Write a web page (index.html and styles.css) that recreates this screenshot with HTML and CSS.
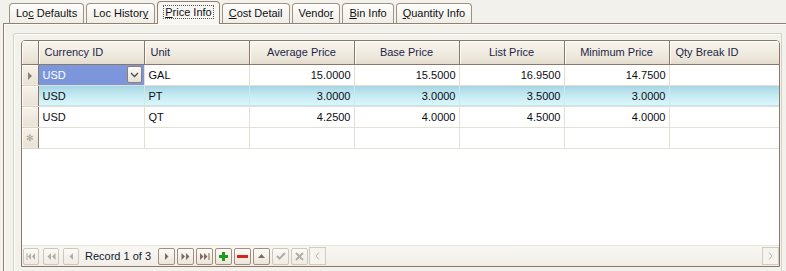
FILE: index.html
```html
<!DOCTYPE html>
<html lang="en">
<head>
    <meta charset="UTF-8">
    <title>Price Info</title>
    <link rel="stylesheet" href="styles.css">
</head>
<body>
    <div class="tabs">
        <div class="tab">Lo<u>c</u> Defaults</div>
        <div class="tab">Loc Histor<u>y</u></div>
        <div class="tab active"><span class="focus"><u>P</u>rice Info</span></div>
        <div class="tab"><u>C</u>ost Detail</div>
        <div class="tab">Vendo<u>r</u></div>
        <div class="tab"><u>B</u>in Info</div>
        <div class="tab"><u>Q</u>uantity Info</div>
    </div>

    <div class="page">
        <div class="inner">
            <div class="grid">
                <table>
                    <colgroup>
                        <col class="c-ind">
                        <col class="c-first">
                        <col class="c-std">
                        <col class="c-std">
                        <col class="c-std">
                        <col class="c-std">
                        <col class="c-std">
                        <col class="c-last">
                    </colgroup>
                    <thead>
                        <tr>
                            <th class="ind"></th>
                            <th class="left">Currency ID</th>
                            <th class="left">Unit</th>
                            <th>Average Price</th>
                            <th>Base Price</th>
                            <th>List Price</th>
                            <th>Minimum Price</th>
                            <th class="left last">Qty Break ID</th>
                        </tr>
                    </thead>
                    <tbody>
                        <tr>
                            <td class="ind"><span class="arrow"></span></td>
                            <td class="selected">
                                <div class="editor">
                                    <span>USD</span>
                                    <span class="drop">
                                        <svg width="9" height="6" viewBox="0 0 9 6"><path d="M1 1 L4.5 4.5 L8 1" fill="none" stroke="#4a4a4a" stroke-width="1.3"/></svg>
                                    </span>
                                </div>
                            </td>
                            <td>GAL</td>
                            <td class="num">15.0000</td>
                            <td class="num">15.5000</td>
                            <td class="num">16.9500</td>
                            <td class="num">14.7500</td>
                            <td></td>
                        </tr>
                        <tr class="hot">
                            <td class="ind"></td>
                            <td>USD</td>
                            <td>PT</td>
                            <td class="num">3.0000</td>
                            <td class="num">3.0000</td>
                            <td class="num">3.5000</td>
                            <td class="num">3.0000</td>
                            <td></td>
                        </tr>
                        <tr>
                            <td class="ind"></td>
                            <td>USD</td>
                            <td>QT</td>
                            <td class="num">4.2500</td>
                            <td class="num">4.0000</td>
                            <td class="num">4.5000</td>
                            <td class="num">4.0000</td>
                            <td></td>
                        </tr>
                        <tr>
                            <td class="ind new">&#x273B;</td>
                            <td></td>
                            <td></td>
                            <td></td>
                            <td></td>
                            <td></td>
                            <td></td>
                            <td></td>
                        </tr>
                    </tbody>
                </table>

                <div class="filler"></div>

                <div class="footer">
                    <div class="navigator">
                        <span class="nav-btn off wide">
                            <svg width="10" height="7" viewBox="0 0 10 7"><path d="M1 0v7" stroke="currentColor"/><path d="M5 0v7L2 3.5z M9 0v7L6 3.5z" fill="currentColor"/></svg>
                        </span>
                        <span class="nav-btn off wide">
                            <svg width="9" height="7" viewBox="0 0 9 7"><path d="M4 0v7L0.5 3.5z M8.5 0v7L5 3.5z" fill="currentColor"/></svg>
                        </span>
                        <span class="nav-btn off wide">
                            <svg width="5" height="7" viewBox="0 0 5 7"><path d="M4 0v7L0.5 3.5z" fill="currentColor"/></svg>
                        </span>
                        <span class="record">Record 1 of 3</span>
                        <span class="nav-btn">
                            <svg width="5" height="7" viewBox="0 0 5 7"><path d="M1 0v7L4.5 3.5z" fill="currentColor"/></svg>
                        </span>
                        <span class="nav-btn">
                            <svg width="9" height="7" viewBox="0 0 9 7"><path d="M0.5 0v7L4 3.5z M5 0v7L8.5 3.5z" fill="currentColor"/></svg>
                        </span>
                        <span class="nav-btn">
                            <svg width="10" height="7" viewBox="0 0 10 7"><path d="M0 0v7L3.5 3.5z M4 0v7L7.5 3.5z" fill="currentColor"/><path d="M9 0v7" stroke="currentColor"/></svg>
                        </span>
                        <span class="nav-btn">
                            <svg width="9" height="9" viewBox="0 0 9 9"><path d="M3 0h3v3h3v3H6v3H3V6H0V3h3z" fill="#1f9a1f"/></svg>
                        </span>
                        <span class="nav-btn">
                            <svg width="11" height="3" viewBox="0 0 11 3"><rect width="11" height="3" fill="#d8231f"/></svg>
                        </span>
                        <span class="nav-btn">
                            <svg width="7" height="4" viewBox="0 0 7 4"><path d="M0 4L3.5 0L7 4z" fill="currentColor"/></svg>
                        </span>
                        <span class="nav-btn off">
                            <svg width="10" height="8" viewBox="0 0 10 8"><path d="M1 4L3.5 6.5L9 1" fill="none" stroke="currentColor" stroke-width="2"/></svg>
                        </span>
                        <span class="nav-btn off">
                            <svg width="9" height="9" viewBox="0 0 9 9"><path d="M1 1L8 8M8 1L1 8" stroke="currentColor" stroke-width="2"/></svg>
                        </span>
                    </div>
                    <div class="hscroll">
                        <span class="scroll-btn">
                            <svg width="5" height="8" viewBox="0 0 5 8"><path d="M4 0.5L1 4L4 7.5" fill="none" stroke="currentColor"/></svg>
                        </span>
                        <span class="track"></span>
                        <span class="scroll-btn">
                            <svg width="5" height="8" viewBox="0 0 5 8"><path d="M1 0.5L4 4L1 7.5" fill="none" stroke="currentColor"/></svg>
                        </span>
                    </div>
                </div>
            </div>
        </div>
    </div>
</body>
</html>
```

FILE: styles.css
```css
* {
    box-sizing: border-box;
}

body {
    margin: 0;
    width: 786px;
    height: 271px;
    overflow: hidden;
    background-color: #f3f1eb;
    font-family: 'Liberation Sans', Arial, sans-serif;
    font-size: 11px;
    color: #000;
}

/* tab strip */

.tabs {
    display: flex;
    align-items: flex-end;
    height: 23px;
    padding-left: 9px;
    position: relative;
    z-index: 2;
}

.tab {
    height: 20px;
    line-height: 19px;
    padding: 0 6px;
    margin-right: 2px;
    border: 1px solid #a09282;
    border-bottom: none;
    border-radius: 4px 4px 0 0;
    background: linear-gradient(#fefefd, #f0ede5);
    color: #111;
    white-space: nowrap;
}

.tab.active {
    height: 23px;
    margin-bottom: -1px;
    padding-top: 1px;
    background: #f7f6f2;
    border-color: #8f8274;
}

.focus {
    outline: 1px dotted #555;
    outline-offset: 0;
    padding: 0 1px;
}

/* tab page */

.page {
    margin-left: 3px;
    width: 820px;
    height: 248px;
    border-top: 1px solid #8f8274;
    border-left: 1px solid #8f8274;
    box-shadow: inset 1px 1px 0 #fbfaf7;
    padding: 9px 0 0 9px;
}

.inner {
    width: 769px;
    height: 238px;
    border: 1px solid #d6d0c6;
    border-bottom: none;
    border-radius: 3px 0 0 0;
    box-shadow: inset 1px 1px 0 #fdfcfa;
    padding: 6px 0 0 7px;
}

/* grid */

.grid {
    width: 759px;
    height: 227px;
    border: 1px solid #8b7868;
    border-radius: 4px 4px 0 0;
    background: #fff;
    display: flex;
    flex-direction: column;
    overflow: hidden;
}

table {
    border-collapse: collapse;
    table-layout: fixed;
    width: 757px;
}

.c-ind { width: 16px; }
.c-first { width: 106px; }
.c-std { width: 105px; }
.c-last { width: 110px; }

th {
    height: 23px;
    padding: 0;
    font-weight: normal;
    color: #1d2546;
    text-align: center;
    background: linear-gradient(#f8f6ef, #ece6da 75%, #e2dacb);
    border-right: 1px solid #8b7868;
    border-bottom: 1px solid #8b7868;
    box-shadow: inset 1px 1px 0 #fdfcf9;
}

th.left {
    text-align: left;
    padding-left: 6px;
}

th.last {
    border-right: none;
}

td {
    height: 21px;
    padding: 0 0 0 4px;
    border-right: 1px solid #e4dfd6;
    border-bottom: 1px solid #e4dfd6;
    white-space: nowrap;
    color: #0c0c14;
}

td:last-child {
    border-right: none;
}

td.num {
    text-align: right;
    padding: 0 3px 0 0;
}

td.ind {
    padding: 0;
    text-align: center;
    background: linear-gradient(#f6f3ec, #e8e2d6);
    border-right: 1px solid #8b7868;
    border-bottom: 1px solid #d9d2c5;
    box-shadow: inset 1px 1px 0 #fdfcf9;
}

.arrow {
    display: inline-block;
    width: 0;
    height: 0;
    border-top: 4px solid transparent;
    border-bottom: 4px solid transparent;
    border-left: 4px solid #8a8276;
    vertical-align: middle;
}

td.new {
    color: #a49d92;
    font-size: 9px;
}

td.selected {
    background: #7c96dc;
    color: #fff;
    padding: 0;
}

.editor {
    display: flex;
    align-items: center;
    justify-content: space-between;
    padding: 0 2px 0 4px;
}

.drop {
    display: flex;
    align-items: center;
    justify-content: center;
    width: 15px;
    height: 17px;
    border: 1px solid #8e8174;
    border-radius: 2px;
    background: linear-gradient(#fbfaf7, #e6e0d4);
}

tr.hot td:not(.ind) {
    background: linear-gradient(#a6d5e3, #c8ecf3 55%, #dcf6fa);
    border-right-color: #cde9ef;
}

.filler {
    flex: 1;
}

/* navigator + horizontal scroll */

.footer {
    height: 21px;
    display: flex;
    align-items: center;
    border-top: 1px solid #ebe6dc;
    background: linear-gradient(#f9f7f3, #f1eee8);
}

.navigator {
    display: flex;
    align-items: center;
    padding-left: 1px;
}

.nav-btn {
    display: flex;
    align-items: center;
    justify-content: center;
    width: 17px;
    height: 17px;
    margin-right: 2px;
    border: 1px solid #a38f7c;
    border-radius: 2px;
    background: linear-gradient(#fdfcfa, #ebe5da);
    color: #7d6d5f;
}

.nav-btn.off {
    border-color: #cdc6bb;
    background: linear-gradient(#fbfaf7, #efebe4);
    color: #b3aca1;
}

.nav-btn.wide {
    width: 16px;
    margin-right: 4px;
}

.record {
    padding: 0 7px 0 2px;
    font-size: 11px;
    color: #0f1733;
}

.hscroll {
    flex: 1;
    display: flex;
    align-items: center;
    margin-left: -1px;
}

.track {
    flex: 1;
}

.scroll-btn {
    display: flex;
    align-items: center;
    justify-content: center;
    width: 17px;
    height: 18px;
    border: 1px solid #d0cac0;
    background: #f6f4ef;
    color: #b5aea4;
}
```
